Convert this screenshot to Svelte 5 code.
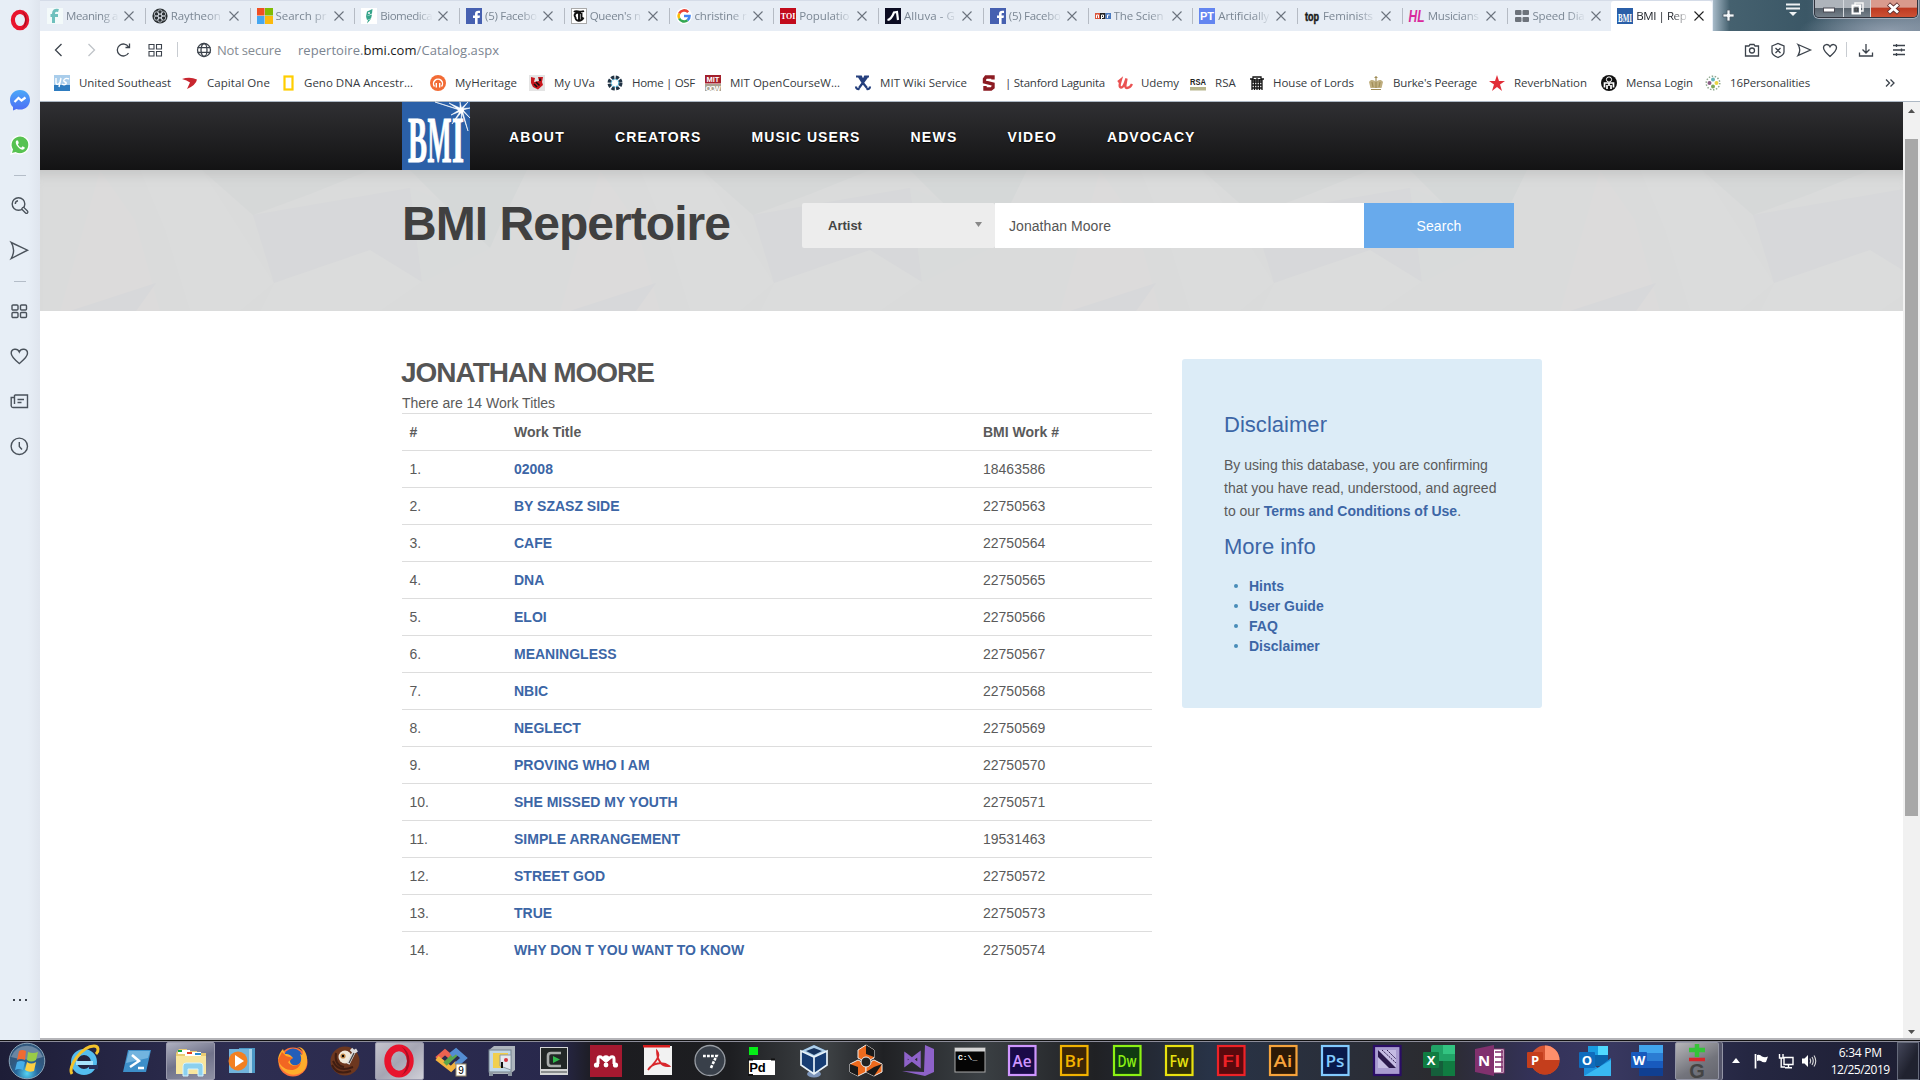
<script>
  // Spreads a label's letters so that it fills the given width in pixels.
  function fit(node, width) {
    if (!width) return;
    const natural = node.getBoundingClientRect().width;
    const count = node.textContent.length;
    node.style.letterSpacing = `${(width - natural) / count}px`;
  }

  const sq = (bg, t, f = '#fff', s = 9, fam = 'Liberation Sans') =>
    `<rect width="16" height="16" fill="${bg}"/><text x="8" y="${8 + s * 0.36}" font-family="${fam}" font-weight="700" font-size="${s}" text-anchor="middle" fill="${f}">${t}</text>`;
  const fb = `<rect width="16" height="16" fill="#4660b0"/><path d="M9 16V10H7V7.6H9V6C9 3.7 10.2 2.7 12.2 2.7H14V5H12.7C11.8 5 11.6 5.5 11.6 6.2V7.6H14L13.6 10H11.6V16Z" fill="#fff"/>`;

  const tabs = [
    { t: 'Meaning a', w: 52, i: `<rect width="16" height="16" fill="#f3fafa"/><path d="M11.500 2.500C8 1.500 6.500 3 6.500 6V15M3.500 7.500H11" fill="none" stroke="#6fc0bd" stroke-width="3"/>` },
    { t: 'Raytheon', w: 50, i: `<circle cx="8" cy="8" r="7.600" fill="#2b3033"/><g fill="none" stroke="#e7edf5" stroke-width=".7"><circle cx="8" cy="8" r="2"/><circle cx="8" cy="4" r="2.200"/><circle cx="8" cy="12" r="2.200"/><circle cx="4.500" cy="6" r="2.200"/><circle cx="11.500" cy="6" r="2.200"/><circle cx="4.500" cy="10" r="2.200"/><circle cx="11.500" cy="10" r="2.200"/></g>` },
    { t: 'Search pr', w: 51, i: `<rect width="7.500" height="7.500" fill="#f04f23"/><rect x="8" width="8" height="7.500" fill="#80bb03"/><rect y="8" width="7.500" height="8" fill="#45a6f0"/><rect x="8" y="8" width="8" height="8" fill="#fbb90d"/>` },
    { t: 'Biomedica', w: 52, i: `<rect width="16" height="16" fill="#fff"/><path d="M6 3.500L11.500 1L11 5.500L5 8.500ZM5 8.500L11 6.500L10 10.500L6 12ZM7 12L10 11L6 15.500Z" fill="#35a48a"/><circle cx="8" cy="5" r="1" fill="#fff"/>` },
    { t: '(5) Facebo', w: 52, i: fb },
    { t: "Queen's n", w: 51, i: `<rect x=".5" y=".5" width="15" height="15" fill="#fff" stroke="#aaa"/><path d="M3 4C5 1.500 9 5 13 3M10 5C4 3.500 2.500 7 4.500 9.500C4 13 10 14.500 12.500 9.500M8 4V13M10.500 5V11" fill="none" stroke="#111" stroke-width="1.900"/>` },
    { t: 'christine r', w: 52, i: `<circle cx="8" cy="8" r="8" fill="#fff"/><g fill="none" stroke-width="2.600"><path d="M12.200 4.200A5.500 5.500 0 0 0 3.200 5.500" stroke="#ea4335"/><path d="M3.200 5.500A5.500 5.500 0 0 0 3.200 10.500" stroke="#fbbc05"/><path d="M3.200 10.500A5.500 5.500 0 0 0 11.500 12.300" stroke="#34a853"/><path d="M11.500 12.300A5.500 5.500 0 0 0 13.500 8H8" stroke="#4285f4"/></g>` },
    { t: 'Populatio', w: 50, i: sq('#c20b1c', 'TOI', '#fff', 8, 'Liberation Serif') },
    { t: 'Alluva - G', w: 51, i: `<rect width="16" height="16" fill="#0b0c22"/><path d="M2.500 12C6 11.500 8 7 9 4.500L12 4L13 12" fill="none" stroke="#fff" stroke-width="2.200"/>` },
    { t: '(5) Facebo', w: 52, i: fb },
    { t: 'The Scien', w: 50, i: `<rect y="5" width="5" height="6" fill="#d8553c"/><rect x="5" y="5" width="5.500" height="6" fill="#222"/><rect x="10.500" y="5" width="5.500" height="6" fill="#4a7ac0"/><path d="M1.500 10V7H3.500V10M6.500 11V7H8.500V9.500H6.500M12.500 10V7H14.500" stroke="#fff" fill="none"/>` },
    { t: 'Artificially', w: 51, i: sq('#6385f0', 'PT', '#fff', 11) },
    { t: 'Feminists', w: 50, i: `<text x="8" y="12.500" font-family="Liberation Sans" font-weight="700" font-size="12" text-anchor="middle" textLength="14" lengthAdjust="spacingAndGlyphs" fill="#181818" stroke="#181818" stroke-width=".5">top</text>` },
    { t: 'Musicians', w: 51, i: `<text x="7.500" y="14" font-family="Liberation Sans" font-weight="700" font-style="italic" font-size="16" text-anchor="middle" textLength="16" lengthAdjust="spacingAndGlyphs" fill="#d9289b">HL</text>` },
    { t: 'Speed Dia', w: 52, i: `<g fill="#6d737b"><rect x="1" y="2" width="6.500" height="5" rx="1"/><rect x="8.500" y="2" width="6.500" height="5" rx="1"/><rect x="1" y="9" width="6.500" height="5" rx="1"/><rect x="8.500" y="9" width="6.500" height="5" rx="1"/></g>` },
    { t: 'BMI | Rep', w: 50, on: true, i: `<rect width="16" height="16" fill="#2a5fa8"/><text x="8" y="13" font-family="Liberation Serif" font-weight="700" font-size="7" text-anchor="middle" textLength="14" fill="#fff" transform="translate(0 -9.500) scale(1 1.800)">BMI</text>` }
  ];

  // Each entry: label, label width, distance to the next entry, icon.
  const marks = [
    { t: 'United Southeast', w: 92, p: 128, i: `<rect width="16" height="10" fill="#a9cdeb"/><rect y="10" width="16" height="6" fill="#2e7cc0"/><path d="M2 3V8C2 10 5 10 6 7L7 3L5 12M15 4C11 2 8 6 11 7C14 8 11 11 8 9" fill="none" stroke="#fff" stroke-width="1.400"/>` },
    { t: 'Capital One', w: 63, p: 101, i: `<path d="M0 4Q8 1.500 15 4.500Q14 10 5 14L8 7.500Q5 5 0 4Z" fill="#c8262f"/>` },
    { t: 'Geno DNA Ancestr...', w: 109, p: 147, tx: -4, i: `<rect x="1.500" y="1.500" width="8" height="13" fill="#fff" stroke="#ffce00" stroke-width="2.200"/>` },
    { t: 'MyHeritage', w: 62, p: 99, i: `<circle cx="8" cy="8" r="8" fill="#f26b35"/><path d="M4.500 11.500A4.500 4.500 0 1 1 11.500 11.500M6.300 8V12.500M9.700 8V12.500" fill="none" stroke="#fff" stroke-width="1.400"/>` },
    { t: 'My UVa', w: 41, p: 78, i: `<rect width="16" height="16" fill="#e4e4e4"/><path d="M2 2L6 3L5 7L10 6L9 2L14 2L13 7L14 10L9 14.500L4 12L2 8Z" fill="#c9161d"/><path d="M7 7L10.500 10.500M5 9L8 12M11 3.500V6" stroke="#111" stroke-width="1.600"/>` },
    { t: 'Home | OSF', w: 63, p: 98, i: `<circle cx="8" cy="8" r="5.800" fill="none" stroke="#234" stroke-width="3.400" stroke-dasharray="3.200 1.355"/><circle cx="8" cy="8" r="3.800" fill="none" stroke="#47a4c9" stroke-width="1.200" stroke-dasharray="2 1"/>` },
    { t: 'MIT OpenCourseW...', w: 110, p: 150, i: `<rect width="16" height="8.500" fill="#a3202c"/><rect y="9" width="16" height="7" fill="#aaa391"/><g font-family="Liberation Sans" font-weight="700" font-size="7.500" fill="#fff" text-anchor="middle"><text x="8" y="7.200">MIT</text><text x="8" y="15.500" textLength="15">OCW</text></g>` },
    { t: 'MIT Wiki Service', w: 87, p: 126, i: `<path d="M1 1.500H6L8 6L10 1.500H14M12 2L8 7.500L4 13M4 2L8 8L12 13M1 11.500Q1 14.500 4.500 14M15 11.500Q15 14.500 11.500 14" fill="none" stroke="#253f7d" stroke-width="2.200"/>` },
    { t: '| Stanford Lagunita', w: 100, p: 136, tx: -1, i: `<path d="M12 4.500V2H5L3.500 4V7L12 9V12.500L10 14H4V11" fill="none" stroke="#8c1b22" stroke-width="3.400"/>` },
    { t: 'Udemy', w: 38, p: 73, tx: -1, i: `<path d="M1 7L4 4.500C3 8 1.500 12 4 12.500C7 13 8 7 9.500 3.500C9 8 7 13 10 13C12 13 14 11 15 9" fill="none" stroke="#ea5252" stroke-width="2.300"/>` },
    { t: 'RSA', w: 21, p: 59, i: `<rect y="12" width="16" height="3.500" fill="#b8b68d"/><text x="8" y="10" font-family="Liberation Sans" font-weight="700" font-size="9" text-anchor="middle" textLength="16" lengthAdjust="spacingAndGlyphs" fill="#222">RSA</text>` },
    { t: 'House of Lords', w: 81, p: 119, tx: -1, i: `<path d="M1 4H4V2H12V4H15M3 15V5H13V15M5.500 4V15M8 3V15M10.500 4V15M3 7H13M3 10H13M3 13H13" fill="none" stroke="#151515" stroke-width="1.300"/>` },
    { t: "Burke's Peerage", w: 84, p: 121, i: `<path d="M2.500 13L1 7C3 4 6 5 8 7C10 5 13 4 15 7L13.500 13Z" fill="#bfae7e"/><path d="M8 1V13M6.500 2.500H9.500M3 14.500H13M4 7L5 12M12 7L11 12" stroke="#a08d58" stroke-width="1.200"/>` },
    { t: 'ReverbNation', w: 73, p: 112, i: `<path d="M8 0L10 6H16L11 9.500L13 16L8 12L3 16L5 9.500L0 6H6Z" fill="#e12d37"/>` },
    { t: 'Mensa Login', w: 67, p: 104, i: `<circle cx="8" cy="8" r="8" fill="#111"/><circle cx="8" cy="4.500" r="2.600" fill="none" stroke="#fff"/><path d="M3.500 12.500V8H12.500V12.500M6 14V10M10 14V10M8 8V11" fill="none" stroke="#fff" stroke-width="1.700"/>` },
    { t: '16Personalities', w: 80, p: 110, i: `<circle cx="8" cy="8" r="6.800" fill="none" stroke="#8fa88f" stroke-width="1.500" stroke-dasharray="1.500 1.550"/><circle cx="8" cy="4.500" r="2" fill="#68b5b8"/><circle cx="11.500" cy="8" r="2" fill="#e9d441"/><circle cx="8" cy="11.500" r="2" fill="#7da65a"/><circle cx="4.500" cy="8" r="2" fill="#8a5c85"/>` }
  ];

  const side = {
    search: '<circle cx="8.500" cy="8" r="6.300"/><path d="M5.300 8A3.200 3.200 0 0 1 8 4.800"/><path d="M13.300 12.800L16.500 16" stroke-width="4" stroke-linecap="round"/><path d="M13.300 12.800L16.500 16" stroke-width="1.400" stroke="#e7eef6" stroke-linecap="round"/>',
    send: '<path d="M1.200 1.500L17.500 9.200L1.200 17.500Q6 9.300 1.200 1.500Z"/>',
    grid: '<rect x="2" y="3" width="6" height="5" rx="1"/><rect x="10.500" y="3" width="6" height="5" rx="1"/><rect x="2" y="10.500" width="6" height="5" rx="1"/><rect x="10.500" y="10.500" width="6" height="5" rx="1"/>',
    heart: '<path d="M9.300 16.500C5 13 1.200 10 1.200 6.300C1.200 1.500 7.500 .8 9.300 5C11 .8 17.500 1.500 17.500 6.300C17.500 10 13.500 13 9.300 16.500Z"/>',
    news: '<path d="M4.500 3H17.500V15.500H3A1.800 1.800 0 0 1 1.200 14V5.500H4.500V3V12M7.500 7.500H14M7.500 10.500H11.500"/>',
    clock: '<circle cx="9.300" cy="9.300" r="8.200"/><path d="M9.300 5V9.500L12 12.500"/>'
  };

  const tools = [
    '<path d="M3 5H6L7 3.500H11L12 5H15.500V15H2.500V5Z"/><circle cx="9" cy="9.500" r="2.500"/>',
    '<path d="M3 5L9 2.500L15 5V11Q15 14 9 16.500Q3 14 3 11ZM6.500 7L11.500 12M11.500 7L6.500 12"/>',
    '<path d="M3 3.500L15.500 9L3 14.500Q6.500 9 3 3.500Z"/>',
    '<path d="M9 15.500C5 12 2.500 9.500 2.500 6.800C2.500 3 7.500 2.300 9 5.700C10.500 2.300 15.500 3 15.500 6.800C15.500 9.500 13 12 9 15.500Z"/>'
  ];

  const nav = [['ABOUT', 55], ['CREATORS', 85.5], ['MUSIC USERS', 108], ['NEWS', 46], ['VIDEO', 48.5], ['ADVOCACY', 87.5]];

  const works = [
    ['02008', '18463586'], ['BY SZASZ SIDE', '22750563'], ['CAFE', '22750564'], ['DNA', '22750565'],
    ['ELOI', '22750566'], ['MEANINGLESS', '22750567'], ['NBIC', '22750568'], ['NEGLECT', '22750569'],
    ['PROVING WHO I AM', '22750570'], ['SHE MISSED MY YOUTH', '22750571'], ['SIMPLE ARRANGEMENT', '19531463'],
    ['STREET GOD', '22750572'], ['TRUE', '22750573'], ['WHY DON T YOU WANT TO KNOW', '22750574']
  ];

  const adobe = (t, c, bg) =>
    `<rect x="3" y="1" width="26.500" height="29" fill="${bg}" stroke="${c}" stroke-width="2.200"/><text x="16" y="22" font-family="Open Sans" font-weight="600" font-size="17" text-anchor="middle" textLength="19" lengthAdjust="spacingAndGlyphs" fill="${c}">${t}</text>`;
  const office = (t, back, box) =>
    `${back}<rect x="0" y="7" width="16" height="16" rx="1" fill="${box}"/><text x="8" y="20" font-family="Open Sans" font-weight="700" font-size="13" text-anchor="middle" fill="#fff">${t}</text>`;
  const operaO = (r) =>
    `<ellipse cx="${r}" cy="${r}" rx="${r * 0.71}" ry="${r * 0.82}" fill="none" stroke="#e8142d" stroke-width="${r * 0.42}"/><path d="M${r * 1.15} ${r * 0.1}A${r * 0.9} ${r} 0 0 1 ${r * 1.15} ${r * 1.9}Q${r * 1.5} ${r * 1.6} ${r * 1.5} ${r}Q${r * 1.5} ${r * 0.4} ${r * 1.15} ${r * 0.1}Z" fill="#a90e22"/>`;

  const tasks = [
    { i: `<ellipse cx="15" cy="17" rx="10" ry="10" fill="none" stroke="#54bdf0" stroke-width="6"/><path d="M7 18H24" stroke="#a6e2fb" stroke-width="4"/><path d="M20 22H29" stroke="#27315c" stroke-width="4"/><path d="M3 29C-2 22 13 1 25 1C30 1 30 6 27 9" fill="none" stroke="#f4c32c" stroke-width="3"/>` },
    { i: `<path d="M7 5H30L25 27H2Z" fill="#3d8fc9"/><path d="M8 6H29L27 13L5 18Z" fill="#72b4df"/><path d="M11 10L18 16L9 22M17 23H23" fill="none" stroke="#fff" stroke-width="2.500"/>` },
    { box: true, i: `<path d="M1 8L4 4H12V6H22V8H31V29H1Z" fill="#e9cc72"/><path d="M3 5H15V9H3ZM10 7H26V11H10Z" fill="#fff"/><path d="M3 5H7V7H3Z" fill="#13a63d"/><path d="M12 7H17V9H12Z" fill="#e34024"/><path d="M20 8H26V10H20Z" fill="#298bd0"/><path d="M1 11H31V29H1Z" fill="#f8e69e"/><path d="M8 31V21Q8 18 11 18H25Q28 18 28 21V31H23V24H13V31Z" fill="#8bd0ef" stroke="#d6f3ff"/>` },
    { i: `<path d="M14 3H30V28H14Z" fill="#4b97c5"/><path d="M10 4H27V28H10Z" fill="#a8d4ea"/><rect x="4" y="4" width="20" height="24" fill="#72b4dc"/><circle cx="13" cy="16" r="9.500" fill="#f28022"/><path d="M10 10L19 16L10 22Z" fill="#fff"/>` },
    { i: `<circle cx="16" cy="17" r="14.500" fill="#ff7139"/><circle cx="16" cy="13" r="9.500" fill="#235eb8"/><path d="M1 14C2 8 5 5 6 4L8 9C13 9 14 11 16 13C12 14 12 18 16 20C23 22 26 15 23 9C27 12 28 4 20 2C29 1 33 15 28 24C21 34 3 31 1 14Z" fill="#ffad2b"/><path d="M1 15L5 7L9 11L16 13L11 17C14 22 20 22 24 17C22 28 6 28 1 15Z" fill="#f26622"/>` },
    { i: `<circle cx="16" cy="16" r="14.500" fill="#6d371f"/><path d="M3 20Q8 31 22 26M4 16Q9 28 24 22M7 8Q5 20 15 22" fill="none" stroke="#3f1d12" stroke-width="2"/><circle cx="16" cy="12" r="6.500" fill="#f0e8da"/><circle cx="14" cy="11" r="2.600" fill="#c48b4b"/><circle cx="14" cy="11" r="1.200"/><path d="M19 19L25 7L22 4M25 7L28 5" fill="none" stroke="#ddd" stroke-width="3.400"/><path d="M20 18L25 8" stroke="#444" stroke-width="1.200"/>` },
    { box: true, lit: true, i: operaO(16) },
    { i: `<g fill="none" stroke-width="5"><path d="M3 14L11 7L18 13" stroke="#ec6250"/><path d="M3 13L17 24L23 18" stroke="#f4b33e"/><path d="M11 19L25 6" stroke="#5ba64b"/><path d="M17 10L22 6L30 13L22 20" stroke="#548dd2"/></g><rect x="22" y="19" width="10" height="12" fill="#fff" stroke="#9a8c6b"/><text x="27" y="29" font-family="Liberation Sans" font-size="10" text-anchor="middle">9</text>` },
    { i: `<path d="M3 5L8 1H29V25L24 29H3Z" fill="#aeb5bd"/><rect x="3" y="5" width="22" height="22" fill="#c2d7e6" stroke="#74818c"/><rect x="7" y="8" width="15" height="15" fill="#f1cf4d"/><path d="M14 10H25V25L14 21Z" fill="#e5e9ef" stroke="#8c98a3"/><circle cx="20" cy="15" r="2" fill="#d53440"/><path d="M16 17V23" stroke="#111" stroke-width="2"/><path d="M5 28V31M24 28V31" stroke="#8b95a1" stroke-width="4"/>` },
    { i: `<rect x="2" y="2" width="28" height="28" fill="#d4d5d5"/><rect x="3" y="3" width="26" height="21" fill="#222726"/><path d="M23 8H13Q10 8 10 11V18Q10 21 13 21H23" fill="none" stroke="#a9adab" stroke-width="2.600"/><path d="M15 11L22 14.500L15 18Z" fill="#30b94b"/><path d="M3 27H29" stroke="#8a8d8d" stroke-width="2"/>` },
    { i: `<rect y="0" width="32" height="32" fill="#a51930"/><path d="M8 19V14Q8 11 11 12L16 16L21 12Q24 11 24 14V19" fill="none" stroke="#fff" stroke-width="3"/><circle cx="16" cy="13.500" r="3.300" fill="#fff"/><circle cx="6.500" cy="20" r="2.600" fill="#fff"/><circle cx="25.500" cy="20" r="2.600" fill="#fff"/><circle cx="16" cy="20" r="2.400" fill="#fff"/>` },
    { i: `<rect x="2" y="1" width="28" height="29" fill="#f2f2f2"/><path d="M1 0H28V2.500H1Z" fill="#d41c1d"/><path d="M15 6C20 12 10 20 6 25C10 18 21 16 27 21C19 22 15 14 15 6Z" fill="none" stroke="#d9272c" stroke-width="1.800"/>` },
    { i: `<circle cx="16" cy="15.500" r="15" fill="#39404a" stroke="#989da4" stroke-width="1.300"/><path d="M9 11H22.500Q20 16 17 23" fill="none" stroke="#fff" stroke-width="2.600" stroke-dasharray="2.800 1.200"/>` },
    { i: `<rect x="3" y="2" width="9" height="8" fill="#05ee17"/><rect x="3" y="15" width="26" height="15" fill="#fff"/><text x="11.500" y="27" font-family="Liberation Sans" font-weight="700" font-size="13" text-anchor="middle">Pd</text><path d="M2 14.500H7M25 14.500H29M2 30H7" stroke="#111" stroke-width="2"/>` },
    { i: `<ellipse cx="16" cy="29" rx="7" ry="3.500" fill="#7e96bb"/><path d="M16 0L29 6V20L16 29L3 20V6Z" fill="#173d73"/><path d="M16 0L29 6L16 12L3 6Z" fill="#aed0ea"/><path d="M16 3L24 6L16 10L8 6Z" fill="#17345e"/><path d="M16 12V29M3 6L16 12L29 6V20L16 29L3 20Z" fill="none" stroke="#e8f3fa" stroke-width="1.700"/>` },
    { i: `<g fill="#ee6a1d" stroke="#eee" stroke-width="1"><path d="M16 0L24 5V13L16 17L8 13V5Z"/><path d="M8 15L16 19V27L8 31L0 27V19Z"/><path d="M24 15L32 19V27L24 31L16 27V19Z"/></g><path d="M16 0L24 5V12L16 9ZM0 19L8 22V31L0 27ZM24 22L32 19L24 31L16 27Z" fill="#191919"/><circle cx="16" cy="17" r="5" fill="#222" stroke="#eee"/>` },
    { i: `<path d="M23 0L32 4V27L23 31L0 26L22 27Z" fill="#8e62c9"/><path d="M4 10L17 20V9L4 19Z" fill="none" stroke="#8e62c9" stroke-width="3.500"/>` },
    { i: `<rect x="1" y="3" width="30" height="24" fill="#050505" stroke="#aaa"/><path d="M1 3H31V6.500H1Z" fill="#d5d5d5"/><text x="4" y="15" font-family="Liberation Mono" font-weight="700" font-size="8" fill="#fff">C:\\_</text>` },
    { i: adobe('Ae', '#cf96ff', '#1a0a47') }, { i: adobe('Br', '#f2b200', '#3c2606') },
    { i: adobe('Dw', '#8cf213', '#103a12') }, { i: adobe('Fw', '#e9e20f', '#302f05') },
    { i: adobe('Fl', '#ef2227', '#5a090d') }, { i: adobe('Ai', '#f6a33b', '#2c1906') },
    { i: adobe('Ps', '#82cbff', '#091a4b') },
    { i: `<rect x="3" y="1" width="26.500" height="29" fill="#a99cd0" stroke="#2b0d66" stroke-width="2.200"/><rect x="7" y="5" width="18" height="18" fill="#c5bce3"/><path d="M7 5L25 23H18L7 12Z" fill="#2b194c"/><path d="M11 5L25 18M16 5L25 14" stroke="#2b194c" stroke-dasharray="2 1"/>` },
    { i: office('X', `<rect x="8" y="0" width="24" height="31" rx="2" fill="#21a366"/><path d="M20 0H32V9H20Z" fill="#33c481"/><path d="M8 16H20V31H8Z" fill="#155f3b"/><path d="M20 16H32V31H20Z" fill="#107c41"/>`, '#107c41') },
    { i: `<rect x="17" y="4" width="12" height="24" fill="#fff" stroke="#84316e"/><path d="M0 4L19 0V31L0 27Z" fill="#81316e"/><path d="M20 7H28M20 12H28M20 17H28M20 22H28M27 5V27" stroke="#81316e" stroke-width="1.500"/><text x="9" y="21" font-family="Open Sans" font-weight="700" font-size="15" text-anchor="middle" fill="#fff">N</text>` },
    { i: office('P', `<circle cx="18" cy="15" r="14.500" fill="#d35230"/><path d="M18 .5A14.500 14.500 0 0 1 32.500 15H18Z" fill="#ff8f6b"/><path d="M3.500 15H32.500A14.500 14.500 0 0 1 3.500 15Z" fill="#c43e1c"/>`, '#c43e1c') },
    { i: office('O', `<rect x="9" y="1" width="20" height="20" fill="#0a64ad"/><path d="M19 1H29V10H19Z" fill="#50d9ff"/><path d="M9 1H19V10H9Z" fill="#199be2"/><path d="M5 14L19 23L32 13V31H5Z" fill="#1c8fdb"/><path d="M5 31L32 15V31Z" fill="#38b8f2"/>`, '#0f6cbd') },
    { i: office('W', `<rect x="8" y="0" width="24" height="31" rx="2" fill="#2b7cd3"/><path d="M8 0H32V8H8Z" fill="#41a5ee"/><path d="M8 16H32V23H8Z" fill="#185abd"/><path d="M8 23H32V31H8Z" fill="#103f91"/>`, '#185abd') }
  ];
</script>

<div class="screen">
  <div class="window">
    <aside>
      <div class="brand"><svg width="20" height="20" viewBox="0 0 20 20">{@html operaO(10)}</svg></div>
      <div class="si">
        <svg width="22" height="22" viewBox="0 0 22 22"><defs><linearGradient id="msg" x2="0" y2="1"><stop stop-color="#4aa8f8" /><stop offset="1" stop-color="#4d6df5" /></linearGradient></defs><path d="M11 1C5 1 1 5.500 1 11C1 14 2.200 16.500 4 18V21.500L7.500 20Q9 20.600 11 20.600C17 20.600 21 16 21 11C21 5.500 17 1 11 1Z" fill="url(#msg)" /><path d="M5.500 13L9.500 9L12.500 11.500L16.500 8.500" fill="none" stroke="#fff" stroke-width="2.200" /></svg>
      </div>
      <div class="si">
        <svg width="20" height="20" viewBox="0 0 20 20"><path d="M1 19L2.300 14.600A9 9 0 1 1 5.700 17.800Z" fill="#57c251" stroke="#fff" stroke-width="1.300" /><path d="M6.500 5.500Q5 7 6.500 10Q9 14 12.500 14.700Q15 14.500 14.800 12.500L12.500 11.300L11.300 12.700Q9 11.800 7.800 9.400L8.800 8L8 5.500Z" fill="#fff" /></svg>
      </div>
      <div class="rule"><i></i></div>
      <div class="si"><svg class="ln" width="19" height="19" viewBox="0 0 19 19">{@html side.search}</svg></div>
      <div class="si"><svg class="ln" width="19" height="19" viewBox="0 0 19 19">{@html side.send}</svg></div>
      <div class="rule"><i></i></div>
      {#each ['grid', 'heart', 'news', 'clock'] as k}
        <div class="si"><svg class="ln" width="19" height="19" viewBox="0 0 19 19">{@html side[k]}</svg></div>
      {/each}
      <div class="more"><i></i><i></i><i></i></div>
    </aside>

    <section class="browser">
      <div class="strip">
        <div class="tabs">
          {#each tabs as tab, n}
            <div class="tab" class:on={tab.on} class:last={n >= 14}>
              <svg width="16" height="16" viewBox="0 0 16 16">{@html tab.i}</svg>
              <div class="title"><span use:fit={tab.w}>{tab.t}</span></div>
              <svg class="x" width="10" height="10" viewBox="0 0 10 10"><path d="M.5 .5L9.500 9.500M9.500 .5L.5 9.500" /></svg>
            </div>
          {/each}
        </div>
        <div class="glass">
          <svg class="plus" width="13" height="13" viewBox="0 0 13 13"><path d="M5 1H8V5H12V8H8V12H5V8H1V5H5Z" fill="#f5f8fa" stroke="#4d5c68" stroke-width=".8" /></svg>
          <svg class="menu" width="16" height="14" viewBox="0 0 16 14"><path d="M1 1.500H15M1 5.500H15" stroke="#eef2f4" stroke-width="2" /><path d="M4 9H12L8 13Z" fill="#eef2f4" /></svg>
          <div class="winbtns">
            <div class="wb min"><svg width="12" height="6" viewBox="0 0 12 6"><rect x=".5" y="1" width="11" height="4" fill="#fff" stroke="#4b4b55" /></svg></div>
            <div class="wb"><svg width="13" height="13" viewBox="0 0 13 13"><path d="M4 3V1H12V9H10" fill="none" stroke="#f5f5f5" stroke-width="1.500" /><rect x="1.500" y="3.500" width="7.500" height="8" fill="none" stroke="#fff" stroke-width="2" /><rect x="4" y="6" width="2.500" height="3" fill="none" stroke="#444" /></svg></div>
            <div class="wb close"><svg width="13" height="11" viewBox="0 0 13 11"><path d="M1.500 1L11.500 10M11.500 1L1.500 10" stroke="#613030" stroke-width="4.500" /><path d="M2 1.500L11 9.500M11 1.500L2 9.500" stroke="#fff" stroke-width="3" /></svg></div>
          </div>
        </div>
      </div>

      <div class="address">
        <div class="nb"><svg class="ln" width="18" height="18" viewBox="0 0 18 18"><path d="M11.500 3L5.500 9L11.500 15" /></svg></div>
        <div class="nb off"><svg class="ln" width="18" height="18" viewBox="0 0 18 18"><path d="M6.500 3L12.500 9L6.500 15" /></svg></div>
        <div class="nb"><svg class="ln" width="18" height="18" viewBox="0 0 18 18"><path d="M14.500 12A6 6 0 1 1 14.500 6M15.500 2.500V6.500H11.500" /></svg></div>
        <div class="nb"><svg class="ln thin" width="18" height="18" viewBox="0 0 18 18"><path d="M3 3.500H8V8H3ZM10.500 3.500H15.500V8H10.500ZM3 10.500H8V15H3ZM10.500 10.500H15.500V15H10.500Z" /></svg></div>
        <i class="vr"></i>
        <svg class="ln globe" width="16" height="16" viewBox="0 0 16 16"><circle cx="8" cy="8" r="6.500" /><ellipse cx="8" cy="8" rx="3" ry="6.500" /><path d="M1.500 5.700H14.500M1.500 10.300H14.500" /></svg>
        <span class="secure" use:fit={64}>Not secure</span>
        <span class="url" use:fit={201}>repertoire.<b>bmi.com</b>/Catalog.aspx</span>
        <div class="grow"></div>
        {#each tools as t}
          <div class="tb"><svg class="ln" width="18" height="18" viewBox="0 0 18 18">{@html t}</svg></div>
        {/each}
        <i class="vr r"></i>
        <div class="tb dl"><svg class="ln" width="18" height="18" viewBox="0 0 18 18"><path d="M9 3V12M5.500 8.500L9 12L12.500 8.500M2.500 11.500V15H15.500V11.500" /></svg></div>
        <div class="tb set"><svg class="ln" width="18" height="18" viewBox="0 0 18 18"><path d="M3 4.500H15M3 9H15M3 13.500H15M6.500 3V6M11.500 7.500V10.500M6.500 12V15" /></svg></div>
      </div>

      <div class="marks">
        {#each marks as m}
          <div class="mark" style="width: {m.p}px">
            <svg width="16" height="16" viewBox="0 0 16 16">{@html m.i}</svg>
            <span use:fit={m.w} style="margin-left: {9 + (m.tx ?? 0)}px">{m.t}</span>
          </div>
        {/each}
        <svg class="ln chev" width="10" height="8" viewBox="0 0 10 8"><path d="M1 .5L4.500 4L1 7.500M5.500 .5L9 4L5.500 7.500" /></svg>
      </div>

      <div class="view">
        <main>
          <header>
            <div class="logo">
              <svg width="68" height="68" viewBox="0 0 68 68">
                <rect width="68" height="68" fill="#2b60a8" />
                <g font-family="Liberation Serif" font-weight="700" font-size="17.500" fill="#fff" stroke="#fff" stroke-width=".3" transform="scale(1 3.750)"><text x="6" y="15.900" textLength="19" lengthAdjust="spacingAndGlyphs">B</text><text x="25.500" y="15.900" textLength="24" lengthAdjust="spacingAndGlyphs">M</text><text x="50" y="15.900" textLength="12" lengthAdjust="spacingAndGlyphs">I</text></g>
                <path d="M33 0L59 8L66 29L60.500 9L68 16L61 8L68 6L61 6.500L66 0L59.500 6L58 0L58 6L47 1L57 8L49 13L58 9.500L50 22L59.500 10L59 19L60.500 9Z" fill="#fff" stroke="#fff" stroke-width=".6" />
                <circle cx="59" cy="8.500" r="2.800" fill="#fff" />
              </svg>
            </div>
            <nav>
              {#each nav as [label, w]}<a href="#top"><span use:fit={w + 1}>{label}</span></a>{/each}
            </nav>
          </header>

          <div class="banner">
            <svg class="facets" width="1863" height="141">
              <defs>
                <pattern id="facet" width="500" height="141" patternUnits="userSpaceOnUse">
                  <rect width="500" height="141" fill="#dadbdb" />
                  <path d="M162 0L330 0L270 24L213 45Z" fill="#d6d8d8" />
                  <path d="M213 45L370 18L382 112L330 80L234 113Z" fill="#d7d8da" />
                  <path d="M370 0H487L460 55L450 78L400 30Z" fill="#d5d8d8" />
                  <path d="M370 18L400 30L450 78L382 112Z" fill="#d9dbdb" />
                  <path d="M60 0L20 141H120L95 50Z" fill="#dcdbdb" />
                  <path d="M100 0H162L234 113L200 141H150L125 60Z" fill="#dbdcdc" />
                  <path d="M30 141L116 113L96 141Z" fill="#d7d8da" />
                  <path d="M234 113L330 80L382 112L340 141H220Z" fill="#dbdcdc" />
                </pattern>
              </defs>
              <rect width="1863" height="141" fill="url(#facet)" />
            </svg>
            <div class="bar">
              <h1><span use:fit={328}>BMI Repertoire</span></h1>
              <div class="select"><span>Artist</span><svg width="7" height="5" viewBox="0 0 7 5"><path d="M0 0H7L3.500 5Z" fill="#888" /></svg></div>
              <div class="input"><span use:fit={102}>Jonathan Moore</span></div>
              <button><span use:fit={45}>Search</span></button>
            </div>
          </div>

          <div class="content">
            <div class="results">
              <h2><span use:fit={253}>JONATHAN MOORE</span></h2>
              <p>There are 14 Work Titles</p>
              <div class="row head"><span>#</span><span>Work Title</span><span>BMI Work #</span></div>
              {#each works as [title, id], n}
                <div class="row"><span>{n + 1}.</span><a href="#work">{title}</a><span>{id}</span></div>
              {/each}
            </div>
            <div class="card">
              <h3><span use:fit={103}>Disclaimer</span></h3>
              <p>By using this database, you are confirming<br />that you have read, understood, and agreed<br />to our <a href="#terms">Terms and Conditions of Use</a>.</p>
              <h3 class="second">More info</h3>
              <ul>
                {#each ['Hints', 'User Guide', 'FAQ', 'Disclaimer'] as l}<li><a href="#info">{l}</a></li>{/each}
              </ul>
            </div>
          </div>
        </main>
        <div class="scroll">
          <svg width="7" height="4" viewBox="0 0 7 4"><path d="M0 4L3.500 0L7 4Z" fill="#505050" /></svg>
          <div class="track"><div class="thumb"></div></div>
          <svg width="7" height="4" viewBox="0 0 7 4"><path d="M0 0L3.500 4L7 0Z" fill="#505050" /></svg>
        </div>
      </div>
    </section>
  </div>

  <footer>
    <div class="orb">
      <svg width="38" height="38" viewBox="0 0 38 38">
        <defs><radialGradient id="orb" cy=".85"><stop stop-color="#55d4f4" /><stop offset=".6" stop-color="#27679d" /><stop offset="1" stop-color="#31587e" /></radialGradient></defs>
        <circle cx="19" cy="19" r="17.800" fill="url(#orb)" stroke="#8aa5b9" />
        <path d="M3 15A17 17 0 0 1 35 15Q20 20 3 15Z" fill="#fff" opacity=".28" />
        <path d="M11 9Q14 7 18 9L17 18Q13 16 9 18Z" fill="#ef6b32" /><path d="M20 10Q25 12 30 10L28 18Q23 21 19 18Z" fill="#9acb46" /><path d="M9 20Q13 18 17 20L15 28Q11 26 7 28Z" fill="#48aee8" /><path d="M19 20Q23 23 28 20L26 29Q21 31 17 28Z" fill="#fcd044" />
      </svg>
    </div>
    {#each tasks as t}
      <div class="task" class:box={t.box} class:lit={t.lit}><svg width="32" height="32" viewBox="0 0 32 32">{@html t.i}</svg></div>
    {/each}
    <div class="stack"><svg width="24" height="36" viewBox="0 0 24 36"><path d="M12 1V14M4 7H20" stroke="#35c339" stroke-width="4.500" /><path d="M4 16.500H20" stroke="#d7262c" stroke-width="3.500" /><text x="12" y="34.500" font-family="Liberation Sans" font-weight="700" font-size="20" text-anchor="middle" fill="#444">G</text></svg></div>
    <div class="tray">
      <svg width="8" height="5" viewBox="0 0 8 5"><path d="M0 5L4 0L8 5Z" fill="#fff" /></svg>
      <svg class="flag" width="16" height="16" viewBox="0 0 16 16"><path d="M2.500 1V15.500" stroke="#fff" stroke-width="1.700" /><path d="M4 2Q7 1 9 3.500Q12 5 15 3.500L13 9Q10 10 8 8Q6 7 4 8Z" fill="#fff" /></svg>
      <svg class="net" width="16" height="16" viewBox="0 0 16 16"><path d="M6 4.500H15V11.500H6ZM10.500 12V14.500M7 14.700H14M1.500 1V5H5V1M3.200 5V14H7" fill="none" stroke="#fff" stroke-width="1.400" /></svg>
      <svg class="vol" width="16" height="14" viewBox="0 0 16 14"><path d="M1 4.500H3.500L7 1V13L3.500 9.500H1Z" fill="#fff" /><path d="M9 4.500Q10.500 7 9 9.500M11 3Q13.500 7 11 11M13 1.500Q16.500 7 13 12.500" fill="none" stroke="#ddd" stroke-width="1.100" /></svg>
      <div class="clock"><span use:fit={43}>6:34 PM</span><span use:fit={59}>12/25/2019</span></div>
      <div class="desk"></div>
    </div>
  </footer>
</div>

<style>
  :global(body) { margin: 0; background: #fff; }
  * { box-sizing: border-box; }
  .screen { width: 1920px; height: 1080px; overflow: hidden; display: flex; flex-direction: column; font-family: 'Liberation Sans', Arial, sans-serif; }
  svg { display: block; flex: none; overflow: visible; }
  a { text-decoration: none; }
  .ln { fill: none; stroke: #3c434c; stroke-width: 1.3; }
  .thin { stroke-width: 1.1; }
  .window { display: flex; height: 1040px; }

  aside { width: 40px; display: flex; flex-direction: column; align-items: center; background: linear-gradient(90deg, #e7eef6 70%, #dfe5ee); }
  .brand { height: 77px; padding-top: 10px; }
  .si { height: 45px; display: flex; align-items: center; padding-right: 1px; }
  .rule { height: 16px; display: flex; align-items: center; }
  .rule i { width: 12px; height: 1px; background: #b4bdc8; }
  aside .ln { stroke: #4a525b; stroke-width: 1.4; }
  .more { margin-top: auto; margin-bottom: 39px; display: flex; gap: 4px; }
  .more i { width: 2px; height: 2px; background: #3c434c; }

  .browser { width: 1880px; display: flex; flex-direction: column; font-family: 'Open Sans', 'Noto Sans', sans-serif; }
  .strip { height: 31px; display: flex; }
  .tabs { width: 1673px; display: flex; background: #e7edf5; border-top: 1px solid #d5dce8; }
  .tab { width: 104.75px; flex: none; height: 30px; padding-left: 7px; display: flex; align-items: center; position: relative; }
  .tab:not(.last)::after { content: ''; position: absolute; right: -1px; top: 7px; width: 1px; height: 16px; background: #b5bbc4; }
  .tab.on { width: 101px; background: #fff; padding-left: 6px; border-radius: 3px 3px 0 0; }
  .title { width: 52px; margin-left: 3px; white-space: nowrap; font-size: 11.5px; line-height: 20px; color: #7b8794; -webkit-mask-image: linear-gradient(90deg, #000 68%, transparent 102%); mask-image: linear-gradient(90deg, #000 68%, transparent 102%); }
  .title span, .mark span, .clock span { display: inline-block; }
  .on .title { color: #20242a; }
  .x { margin-left: 6px; fill: none; stroke: #6b737d; stroke-width: 1.1; }
  .on .x { stroke: #222; }
  .glass { flex: 1; display: flex; align-items: flex-start; background: radial-gradient(ellipse 90px 22px at 85% 100%, #8e9cac, transparent), linear-gradient(90deg, #a7bac8, #45616f 8%, #3b5766 45%, #6b7c8d); }
  .plus { margin: 9px 0 0 9px; }
  .menu { margin: 3px 0 0 50px; }
  .winbtns { margin-left: 13px; height: 18px; display: flex; border: 1px solid #30333d; border-top: 0; border-radius: 0 0 5px 5px; overflow: hidden; box-shadow: 0 0 0 1px #a3adb9; }
  .wb { width: 27px; display: flex; align-items: center; justify-content: center; background: linear-gradient(#aeb4bb 45%, #59646e 50%, #75808a); border-right: 1px solid #d5d9de; padding-bottom: 1px; }
  .wb.min { width: 29px; padding-top: 3px; }
  .wb.close { width: 46px; border: 0; background: linear-gradient(#d99a8d 42%, #bd3a22 48%, #cd5134); padding-right: 1px; }

  .address { height: 37px; display: flex; align-items: center; background: #fff; padding-left: 3px; }
  .nb { width: 32px; display: flex; justify-content: center; }
  .nb.off .ln { stroke: #bfc3c8; }
  .vr { width: 1px; height: 15px; background: #c8ccd1; margin: 0 18px 0 6px; }
  .secure { margin-left: 5px; font-size: 13px; font-weight: 400; color: #858b92; padding-top: 1px; }
  .url { margin-left: 17px; font-size: 13px; color: #7b8490; white-space: nowrap; }
  .url b { font-weight: 400; color: #1a1a1a; }
  .grow { flex: 1; }
  .tb { width: 26px; display: flex; justify-content: center; }
  .vr.r { margin: 0 6px 0 3px; }
  .set { margin: 0 8px 0 7px; }

  .marks { height: 34px; display: flex; align-items: center; background: #fff; border-bottom: 1px solid #adb8c4; padding: 0 0 4px 14px; }
  .mark { flex: none; display: flex; align-items: center; white-space: nowrap; font-size: 11.5px; color: #363a40; }
  .mark span { margin-top: -1px; }
  .chev { margin-left: 70px; }

  .view { height: 938px; display: flex; border-bottom: 2px solid #b5b5b9; font-family: 'Liberation Sans', Arial, sans-serif; background: #fff; }
  main { width: 1863px; background: #fff; }
  header { height: 68px; padding-left: 362px; display: flex; align-items: center; background: linear-gradient(#303033, #131314); }
  nav { display: flex; gap: 50px; margin-left: 39px; padding-top: 2px; }
  nav a { color: #fff; font-size: 14px; font-weight: 700; text-shadow: 0 1px 1px #000; white-space: nowrap; }
  .banner { height: 141px; display: grid; overflow: hidden; }
  .banner > * { grid-area: 1 / 1; }
  .bar { display: flex; align-items: flex-start; padding: 33px 0 0 362px; box-shadow: inset 0 14px 12px -10px #bbbcbcbb; z-index: 1; }
  h1 { width: 400px; margin: -7px 0 0; font-size: 48px; line-height: 56px; color: #404040; white-space: nowrap; }
  .select { width: 193px; height: 45px; display: flex; align-items: center; justify-content: space-between; padding: 0 13px 0 26px; background: #ededed; border-radius: 2px; font-size: 13px; font-weight: 700; color: #444; }
  .select svg { margin-top: -3px; }
  .input { width: 369px; height: 45px; display: flex; align-items: center; padding-left: 14px; background: #fff; font-size: 14px; color: #555; }
  button { width: 150px; height: 45px; border: 0; padding: 0; background: #68aaec; color: #fff; font: 14px 'Liberation Sans', Arial, sans-serif; }
  .content { display: flex; align-items: flex-start; gap: 30px; padding: 48px 0 0 362px; }
  .results { width: 750px; font-size: 14px; color: #5a5a5a; }
  h2 { margin: 0 0 0 -1px; font-size: 28px; line-height: 28px; color: #555; white-space: nowrap; }
  .results p { margin: 7px 0 0; height: 19px; line-height: 19px; }
  .row { height: 37px; display: grid; grid-template-columns: 104.5px 469px 1fr; align-items: center; padding: 0 8px 0 7.5px; border-top: 1px solid #ddd; }
  .head { font-weight: 700; }
  .row a { font-weight: 700; color: #3c66a6; }
  .card { width: 360px; height: 349px; padding: 53px 0 0 42px; background: #dcecf7; border-radius: 3px; font-size: 14px; color: #5a5a5a; }
  h3 { margin: 0; font-size: 22px; font-weight: 400; line-height: 26px; color: #3c66a6; }
  .card p { margin: 16px 0 0; line-height: 23px; white-space: nowrap; }
  .card a { color: #3c66a6; font-weight: 700; }
  .card .second { margin-top: 11px; }
  ul { margin: 16px 0 0; padding: 0 0 0 10px; list-style: none; }
  li { height: 20px; line-height: 20px; display: flex; align-items: center; gap: 11px; }
  li::before { content: ''; width: 4px; height: 4px; border-radius: 50%; background: #478cb8; }

  .scroll { width: 17px; background: #f1f1f1; display: flex; flex-direction: column; align-items: center; padding: 7px 0 4px; }
  .track { flex: 1; width: 13px; padding-top: 26px; }
  .thumb { height: 677px; background: #a8a8a8; }

  footer { height: 40px; display: flex; align-items: center; border-top: 1px solid #111; box-shadow: inset 0 1px #8c8c99; background: linear-gradient(90deg, #1d1d37, #2e2e51 12%, #28284c 29%, #1c1c20 31%, #1d1e21 38%, #3e4245 43%, #202124 46%, #3b4044 51%, #202124 57%, #283347 63%, #2b2b2f 75%, #34325a 80%, #383860 84%, #252742 91%, #1d1e32); }
  .orb { width: 59px; padding-left: 8px; }
  .task { width: 52.07px; height: 38px; display: flex; align-items: center; justify-content: center; flex: none; }
  .task.box { width: 49px; margin: 0 0 0 3.2px; border: 1px solid #9a9aad; border-radius: 2px; background: linear-gradient(160deg, #aeb0bf, #70728a 50%, #8f91a4); }
  .task.lit { background: linear-gradient(140deg, #c4c4cc, #a5a5b3 50%, #d0d0d8); }
  .stack { width: 44px; height: 38px; flex: none; margin-left: 2px; border: 1px solid #9395a5; border-radius: 2px; display: flex; align-items: center; justify-content: center; background: linear-gradient(150deg, #b5b5b8, #73747c 60%, #64656e); box-shadow: 3px 0 #55566b, 4px 0 #9395a5; }
  .tray { flex: 1; display: flex; align-items: center; padding-left: 13px; }
  .flag { margin-left: 13px; }
  .net { margin-left: 9px; }
  .vol { margin-left: 7px; }
  .clock { width: 70px; margin-left: 8px; display: flex; flex-direction: column; align-items: center; font: 12px/17px 'Open Sans', 'Noto Sans', sans-serif; color: #fff; white-space: nowrap; }
  .desk { width: 22px; height: 38px; margin-left: auto; margin-right: 1px; border: 1px solid #666b7b; background: linear-gradient(120deg, #44475a, #20222f 60%); }
</style>
